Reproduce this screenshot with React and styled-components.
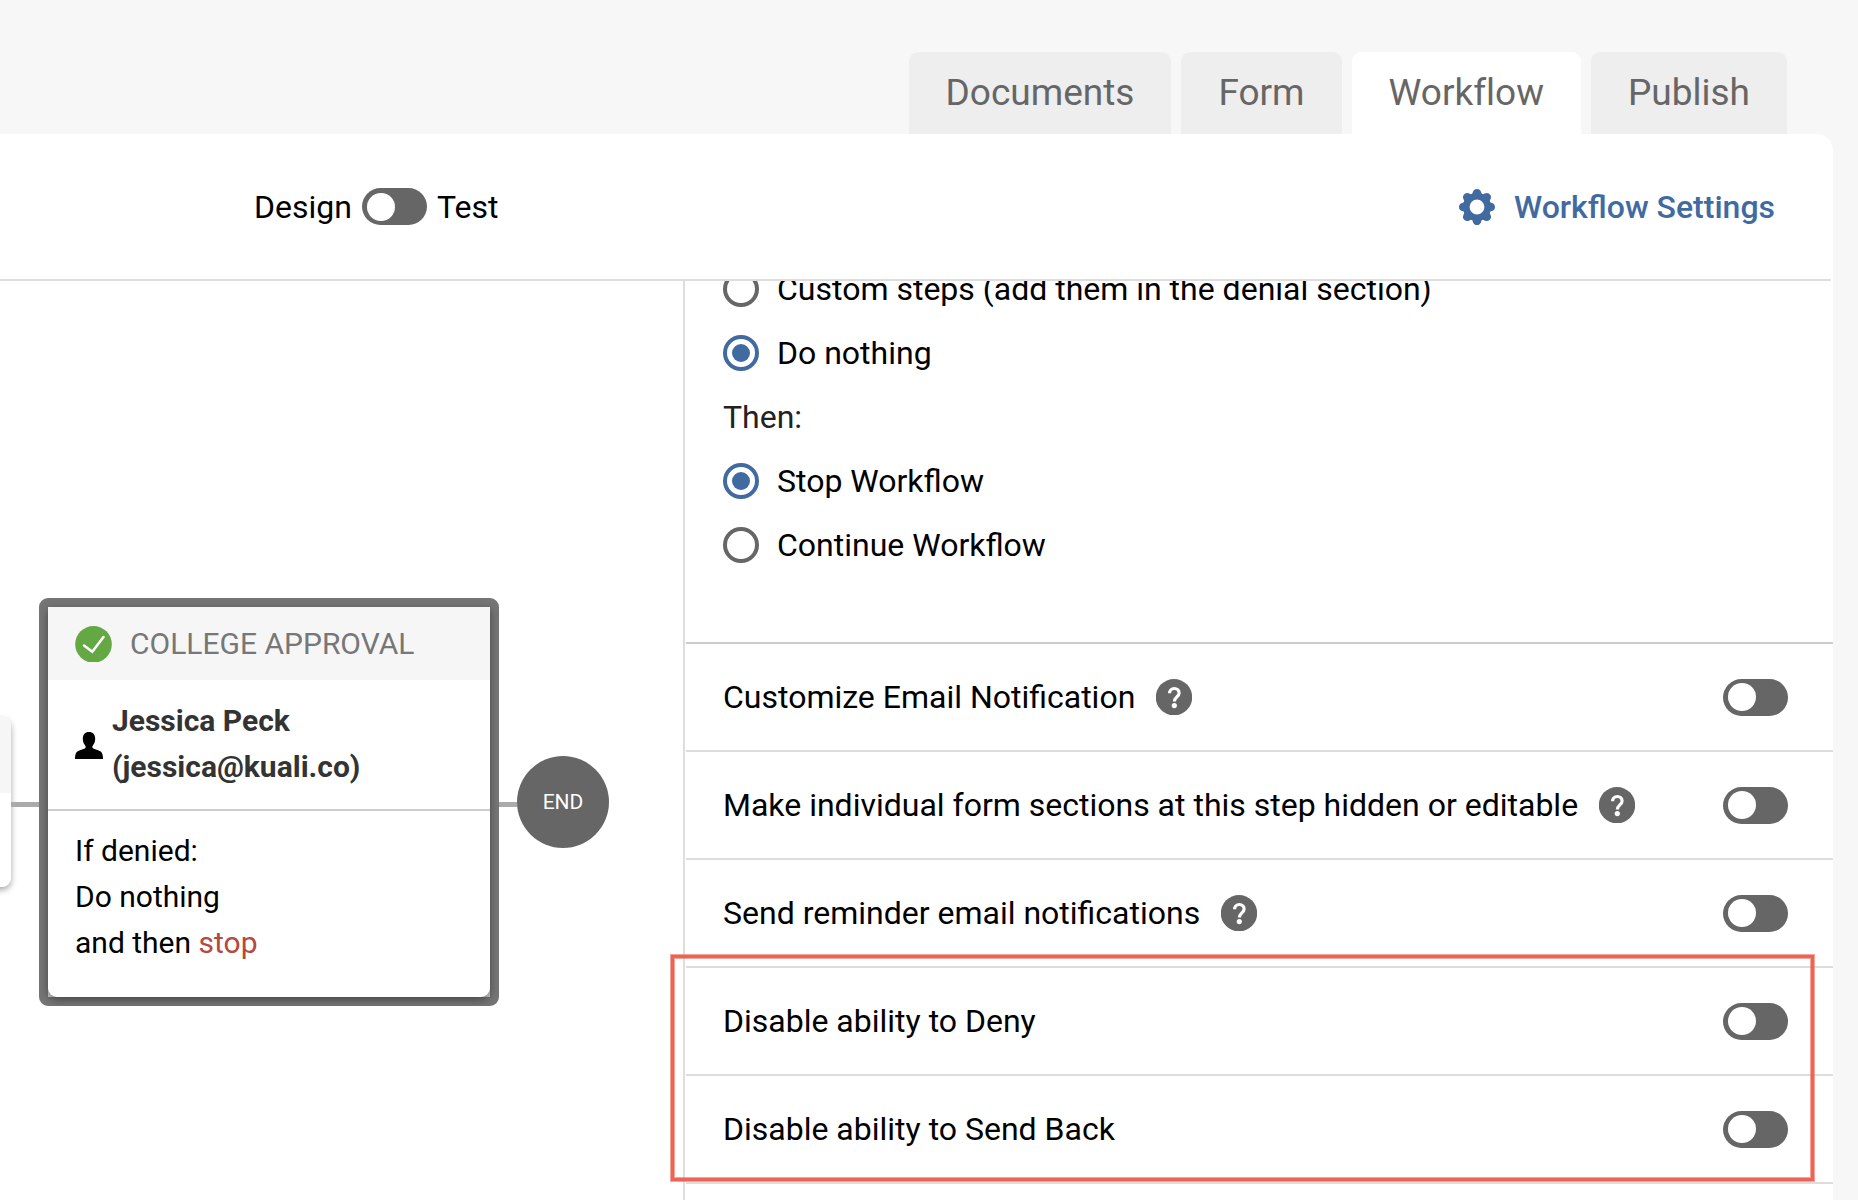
import React, { useState } from "react";
import styled, { createGlobalStyle } from "styled-components";

const GlobalStyle = createGlobalStyle`
	* {
		box-sizing: border-box;
	}
	body {
		margin: 0;
		background: #f7f7f7;
		color: #000;
		font-family: Roboto, "Liberation Sans", sans-serif;
		font-size: 32px;
		line-height: 36px;
	}
`;

const TABS = ["Documents", "Form", "Workflow", "Publish"];
const TEETH = [0, 45, 90, 135, 180, 225, 270, 315];

const GearIcon = () => (
	<svg width="36" height="36" viewBox="0 0 36 36" fill="currentColor" aria-hidden="true">
		<circle cx="18" cy="18" r="10.5" fill="none" stroke="currentColor" strokeWidth="6.2" />
		{TEETH.map((angle) => (
			<path
				key={angle}
				transform={`rotate(${angle} 18 18)`}
				d="M12.2 8V5.400c1-.300 1.400-1.200 1.700-2.300C14.500 1 15.900 0 18 0s3.500 1 4.100 3.100c.3 1.100.7 2 1.700 2.300V8z"
			/>
		))}
	</svg>
);

const CheckIcon = () => (
	<svg width="37" height="36" viewBox="0 0 37 36" aria-hidden="true">
		<circle cx="18.5" cy="18.3" r="18.3" fill="#64a844" />
		<path d="M9 19.500l8.300 6.300L28.500 11" fill="none" stroke="#fff" strokeWidth="2.6" strokeLinecap="round" />
	</svg>
);

const PersonIcon = () => (
	<svg width="28" height="30" viewBox="0 -3 28 30" aria-hidden="true">
		<path d="M14 0c3.900 0 6.200 2.700 6.200 6.800 0 2.500-.800 5-2.400 6.700-.700.800-.700 2.300.300 2.900 1.400.900 5.200 1.300 7.600 3.200C27.500 21.100 28 23.500 28 27H0c0-3.500.500-5.900 2.300-7.400 2.400-1.900 6.200-2.300 7.600-3.200 1-.600 1-2.100.300-2.900C8.600 11.800 7.800 9.300 7.800 6.800 7.800 2.700 10.100 0 14 0z" />
	</svg>
);

const HelpIcon = () => (
	<svg width="36" height="36" viewBox="0 0 36 36" aria-hidden="true">
		<circle cx="18" cy="18.2" r="18.2" fill="#666" />
		<path
			d="M13.600 14.200c0-2.700 2-4.700 4.700-4.700s4.800 1.900 4.800 4.500c0 3.800-4.700 4.200-4.700 8.600"
			fill="none"
			stroke="#fff"
			strokeWidth="3.2"
		/>
		<circle cx="18.3" cy="26.6" r="2.6" fill="#fff" />
	</svg>
);

const Radio = ({ name, label, defaultChecked }) => (
	<RadioLabel>
		<RadioInput type="radio" name={name} defaultChecked={defaultChecked} />
		{label}
	</RadioLabel>
);

const Setting = ({ id, label, help }) => (
	<SettingRow>
		<label htmlFor={id}>{label}</label>
		{help && (
			<HelpButton type="button" aria-label={"Help: " + label}>
				<HelpIcon />
			</HelpButton>
		)}
		<RowSwitch type="checkbox" role="switch" id={id} />
	</SettingRow>
);

const App = () => {
	const [active, setActive] = useState("Workflow");

	return (
		<Page>
			<GlobalStyle />
			<Tabs>
				{TABS.map((tab) => (
					<Tab key={tab} type="button" $active={tab === active} onClick={() => setActive(tab)}>
						{tab}
					</Tab>
				))}
			</Tabs>
			<Panel>
				<Toolbar>
					<Mode>
						<label htmlFor="mode">Design</label>
						<Switch type="checkbox" role="switch" id="mode" />
						<label htmlFor="mode">Test</label>
					</Mode>
					<SettingsLink href="#settings">
						<GearIcon />
						Workflow Settings
					</SettingsLink>
				</Toolbar>
				<Content>
					<Canvas>
						<PrevStep />
						<Connector $width="28px" />
						<Selected>
							<Step>
								<StepHead>
									<CheckIcon />
									COLLEGE APPROVAL
								</StepHead>
								<Assignee>
									<PersonIcon />
									<div>
										Jessica Peck
										<br />
										(jessica@kuali.co)
									</div>
								</Assignee>
								<Denied>
									If denied:
									<br />
									Do nothing
									<br />
									and then <Stop>stop</Stop>
								</Denied>
							</Step>
						</Selected>
						<Connector $width="18px" />
						<End>END</End>
					</Canvas>
					<Sidebar>
						<Options>
							<Radio name="denied" label="Custom steps (add them in the denial section)" />
							<Radio name="denied" label="Do nothing" defaultChecked />
							<Then>Then:</Then>
							<Radio name="then" label="Stop Workflow" defaultChecked />
							<Radio name="then" label="Continue Workflow" />
						</Options>
						<Setting id="customize" label="Customize Email Notification" help />
						<Setting id="sections" label="Make individual form sections at this step hidden or editable" help />
						<Setting id="reminder" label="Send reminder email notifications" help />
						<Group>
							<Setting id="deny" label="Disable ability to Deny" />
							<Setting id="sendback" label="Disable ability to Send Back" />
							<Highlight />
						</Group>
					</Sidebar>
				</Content>
			</Panel>
		</Page>
	);
};

const Page = styled.div`
	display: flex;
	flex-direction: column;
	min-height: 100vh;
	padding: 52px 25px 0 0;
`;
const Tabs = styled.nav`
	display: flex;
	justify-content: flex-end;
	gap: 10px;
	padding-right: 46px;
`;
const Tab = styled.button`
	height: 82px;
	padding: 0 37px 2px;
	border: 0;
	border-radius: 9px 9px 0 0;
	background: ${(props) => (props.$active ? "#fff" : "#eee")};
	color: #666;
	font-family: inherit;
	font-size: 37px;
	font-variant-ligatures: none;
	cursor: pointer;
`;
const Panel = styled.main`
	display: flex;
	flex-direction: column;
	flex: 1;
	border-radius: 0 17px 0 0;
	background: #fff;
`;
const Toolbar = styled.header`
	display: flex;
	align-items: center;
	justify-content: space-between;
	height: 147px;
	margin-right: 2px;
	padding: 0 56px 0 254px;
	border-bottom: 2px solid #ddd;
`;
const Mode = styled.div`
	display: flex;
	align-items: center;
	gap: 10px;
`;
const Switch = styled.input`
	appearance: none;
	display: flex;
	align-items: center;
	width: 65px;
	height: 37px;
	margin: 0;
	padding: 0 5px;
	border-radius: 19px;
	background: #666;
	cursor: pointer;

	&::before {
		content: "";
		width: 28px;
		height: 28px;
		border-radius: 50%;
		background: #fff;
	}
	&:checked {
		justify-content: flex-end;
		background: #416aa1;
	}
`;
const SettingsLink = styled.a`
	display: flex;
	align-items: center;
	gap: 19px;
	color: #416aa1;
	font-weight: 500;
	text-decoration: none;
`;
const Content = styled.div`
	display: grid;
	grid-template-columns: minmax(0, 683fr) minmax(0, 1150fr);
	flex: 1;
`;
const Canvas = styled.section`
	display: flex;
	align-items: center;
	align-self: start;
	padding-top: 317px;
	overflow: hidden;
`;
const PrevStep = styled.div`
	flex: none;
	width: 200px;
	height: 170px;
	margin-left: -189px;
	border-radius: 9px;
	background: linear-gradient(#f6f6f6 76px, #fff 76px);
	box-shadow: 0 3px 6px rgba(0, 0, 0, 0.35);
`;
const Connector = styled.div`
	flex: none;
	width: ${(props) => props.$width};
	height: 5px;
	margin-top: 5px;
	background: #aaa;
`;
const Selected = styled.div`
	flex: none;
	width: 460px;
	border: 9px solid #757575;
	border-radius: 9px;
	background: #ccc;
`;
const Step = styled.article`
	border-radius: 0 0 9px 9px;
	background: #fff;
	box-shadow: 0 3px 9px rgba(0, 0, 0, 0.4);
	font-size: 30px;
	line-height: 46px;
`;
const StepHead = styled.header`
	display: flex;
	align-items: center;
	gap: 18px;
	height: 73px;
	padding: 0 27px;
	background: #f6f6f6;
	color: #777;
`;
const Assignee = styled.div`
	display: flex;
	align-items: center;
	gap: 9px;
	padding: 18px 27px 19px;
	border-bottom: 2px solid #ccc;
	color: #333;
	font-weight: 700;

	svg {
		fill: #000;
	}
`;
const Denied = styled.div`
	padding: 17px 27px 31px;
`;
const Stop = styled.span`
	color: #b5483f;
`;
const End = styled.div`
	display: flex;
	align-items: center;
	justify-content: center;
	flex: none;
	width: 92px;
	height: 92px;
	border-radius: 50%;
	background: #666;
	color: #fff;
	font-size: 21px;
`;
const Sidebar = styled.aside`
	overflow-x: visible;
	overflow-y: clip;
	padding-left: 1px;
	border-left: 2px solid #ddd;
`;
const Options = styled.div`
	display: flex;
	flex-direction: column;
	gap: 28px;
	margin-top: -10px;
	padding: 0 37px 79px;
	border-bottom: 2px solid #ccc;
`;
const RadioLabel = styled.label`
	display: flex;
	align-items: center;
	gap: 18px;
	cursor: pointer;
`;
const RadioInput = styled.input`
	appearance: none;
	display: grid;
	place-items: center;
	width: 36px;
	height: 36px;
	margin: 0;
	border: 4px solid #666;
	border-radius: 50%;

	&:checked {
		border-color: #416aa1;
	}
	&:checked::before {
		content: "";
		width: 18px;
		height: 18px;
		border-radius: 50%;
		background: #416aa1;
	}
`;
const Then = styled.div`
	color: #222;
`;
const SettingRow = styled.div`
	display: flex;
	align-items: center;
	height: 108px;
	padding: 0 45px 0 37px;
	border-bottom: 2px solid #ddd;
`;
const HelpButton = styled.button`
	display: flex;
	margin-left: 21px;
	padding: 0;
	border: 0;
	background: none;
	cursor: pointer;
`;
const RowSwitch = styled(Switch)`
	margin-left: auto;
`;
const Group = styled.div`
	position: relative;
`;
// red frame laid over the last two rows
const Highlight = styled.div`
	position: absolute;
	top: -13px;
	right: 19px;
	bottom: 3px;
	left: -15px;
	border: 3px solid #ec6554;
	box-shadow: 0 0 0 1px rgba(236, 101, 84, 0.6), inset 0 0 0 1px rgba(236, 101, 84, 0.6);
	pointer-events: none;
`;

export default App;
